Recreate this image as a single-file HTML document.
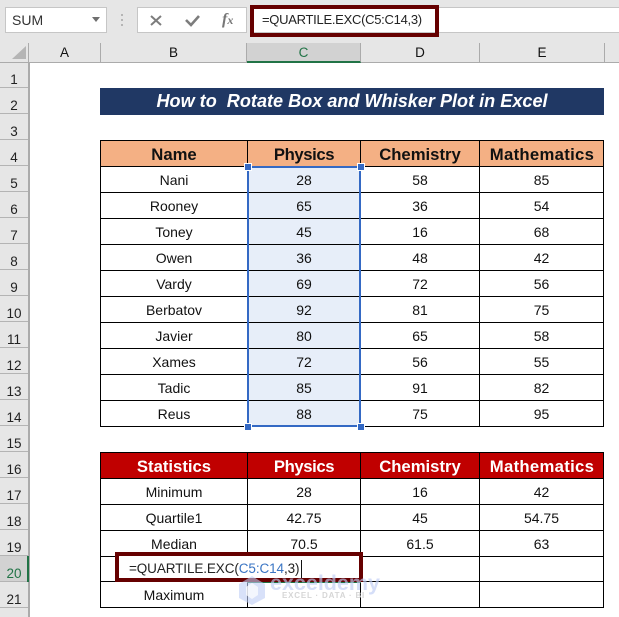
<!DOCTYPE html>
<html><head><meta charset="utf-8"><style>
html,body{margin:0;padding:0;background:#fff}
#p{position:relative;width:619px;height:617px;overflow:hidden;background:#fff;font-family:"Liberation Sans",sans-serif;color:#111}
#p div{position:absolute;box-sizing:border-box}
.ch{top:43px;height:19px;font-size:13.5px;text-align:center;line-height:20px;border-right:1px solid #ababab;color:#111}
.rh{left:0;width:28px;height:26px;font-size:13.5px;text-align:center;line-height:27px;border-bottom:1.5px solid #b4b4b4;color:#222;padding-top:4px}
table{position:absolute;left:100px;border-collapse:collapse;table-layout:fixed;font-size:14px}
td{height:25px;padding:2px 0 0;border:1px solid #000;text-align:center;line-height:23px;box-sizing:border-box;overflow:hidden}
tr.h td{font-size:16.7px;font-weight:bold}
.or td{background:#f4b084;color:#111}
.rd td{background:#c00000;color:#fff}
tr.h td.ph{letter-spacing:-.4px}
tr.h td.m{letter-spacing:.3px;padding-left:1px}
.s td:nth-child(2){background:#e7eef9}
</style></head><body><div id="p">
<div style="left:0;top:0;width:619px;height:62px;background:#e6e6e6"></div>
<div style="left:0;top:62px;width:28px;height:555px;background:#e6e6e6"></div>

<div style="left:5px;top:7px;width:102px;height:26px;background:#fff;border:1px solid #c6c6c6;font-size:14px;line-height:25px;padding-left:6px;color:#333">SUM</div>
<svg style="position:absolute;left:92px;top:17px" width="10" height="6"><path d="M0 0H8L4 5Z" fill="#6f6f6f"/></svg>
<svg style="position:absolute;left:120px;top:13px" width="4" height="14"><rect x="1" y="1" width="2" height="2" fill="#b5b5b5"/><rect x="1" y="6" width="2" height="2" fill="#b5b5b5"/><rect x="1" y="11" width="2" height="2" fill="#b5b5b5"/></svg>
<div style="left:137px;top:7px;width:110px;height:26px;background:#fff;border:1px solid #c6c6c6"></div>
<svg style="position:absolute;left:149px;top:14px" width="14" height="13"><path d="M2 2L12 11M12 2L2 11" stroke="#7d7d7d" stroke-width="2" fill="none"/></svg>
<svg style="position:absolute;left:184px;top:14px" width="17" height="13"><path d="M2 6L7 11L15 2" stroke="#7d7d7d" stroke-width="2.6" fill="none"/></svg>
<div style="left:222px;top:10px;width:16px;height:20px;font:italic bold 16px 'Liberation Serif',serif;color:#777;line-height:20px;white-space:nowrap">f<span style="font-size:12px">x</span></div>
<div style="left:250px;top:7px;width:369px;height:26px;background:#fff;border-top:1px solid #c6c6c6;border-bottom:1px solid #c6c6c6"></div>
<div style="left:262px;top:10px;height:20px;font-size:13px;line-height:20px;color:#222;white-space:nowrap;letter-spacing:-.28px">=QUARTILE.EXC(C5:C14,3)</div>
<div style="left:250px;top:5px;width:189px;height:32px;border:4px solid #660000"></div>

<svg style="position:absolute;left:12px;top:46px" width="15" height="14"><path d="M14 0V13H0Z" fill="#b5b5b5"/></svg>
<div style="left:0;top:62px;width:619px;height:1px;background:#ababab"></div>
<div style="left:28px;top:43px;width:1px;height:20px;background:#ababab"></div>
<div class="ch" style="left:29px;width:72px">A</div>
<div class="ch" style="left:101px;width:146px">B</div>
<div class="ch" style="left:247px;width:114px;background:#d2d2d2;height:20px;color:#217346;border-bottom:2px solid #217346">C</div>
<div class="ch" style="left:361px;width:119px">D</div>
<div class="ch" style="left:480px;width:125px">E</div>
<div style="left:28px;top:62px;width:2px;height:555px;background:#ababab"></div>

<div class="rh" style="top:62px">1</div><div class="rh" style="top:88px">2</div><div class="rh" style="top:114px">3</div><div class="rh" style="top:140px">4</div><div class="rh" style="top:166px">5</div><div class="rh" style="top:192px">6</div><div class="rh" style="top:218px">7</div><div class="rh" style="top:244px">8</div><div class="rh" style="top:270px">9</div><div class="rh" style="top:296px">10</div><div class="rh" style="top:322px">11</div><div class="rh" style="top:348px">12</div><div class="rh" style="top:374px">13</div><div class="rh" style="top:400px">14</div><div class="rh" style="top:426px">15</div><div class="rh" style="top:452px">16</div><div class="rh" style="top:478px">17</div><div class="rh" style="top:504px">18</div><div class="rh" style="top:530px">19</div>
<div class="rh" style="top:556px;background:#d2d2d2;color:#217346">20</div>
<div style="left:27px;top:556px;width:2px;height:26px;background:#217346"></div>
<div class="rh" style="top:582px">21</div>

<div style="left:100px;top:88px;width:504px;height:27px;background:#203864;color:#fff;font-weight:bold;font-style:italic;font-size:18.1px;line-height:27px;text-align:center;white-space:pre">How to  Rotate Box and Whisker Plot in Excel</div>

<table style="top:140px;width:504px"><colgroup><col style="width:147px"><col style="width:113px"><col style="width:119px"><col style="width:124px"></colgroup>
<tr class="h or"><td>Name</td><td class="ph">Physics</td><td>Chemistry</td><td class="m">Mathematics</td></tr>
<tbody class="s">
<tr><td>Nani</td><td>28</td><td>58</td><td>85</td></tr>
<tr><td>Rooney</td><td>65</td><td>36</td><td>54</td></tr>
<tr><td>Toney</td><td>45</td><td>16</td><td>68</td></tr>
<tr><td>Owen</td><td>36</td><td>48</td><td>42</td></tr>
<tr><td>Vardy</td><td>69</td><td>72</td><td>56</td></tr>
<tr><td>Berbatov</td><td>92</td><td>81</td><td>75</td></tr>
<tr><td>Javier</td><td>80</td><td>65</td><td>58</td></tr>
<tr><td>Xames</td><td>72</td><td>56</td><td>55</td></tr>
<tr><td>Tadic</td><td>85</td><td>91</td><td>82</td></tr>
<tr><td>Reus</td><td>88</td><td>75</td><td>95</td></tr>
</tbody></table>

<div style="left:247px;top:166px;width:114px;height:261px;border:2px solid #3469c4"></div>
<div style="left:245px;top:164px;width:6px;height:6px;background:#3469c4;outline:1px solid #fff"></div>
<div style="left:358px;top:164px;width:6px;height:6px;background:#3469c4;outline:1px solid #fff"></div>
<div style="left:245px;top:424px;width:6px;height:6px;background:#3469c4;outline:1px solid #fff"></div>
<div style="left:358px;top:424px;width:6px;height:6px;background:#3469c4;outline:1px solid #fff"></div>

<table style="top:452px;width:504px"><colgroup><col style="width:147px"><col style="width:113px"><col style="width:119px"><col style="width:124px"></colgroup>
<tr class="h rd"><td>Statistics</td><td class="ph">Physics</td><td>Chemistry</td><td class="m">Mathematics</td></tr>
<tr><td>Minimum</td><td>28</td><td>16</td><td>42</td></tr>
<tr><td>Quartile1</td><td>42.75</td><td>45</td><td>54.75</td></tr>
<tr><td>Median</td><td>70.5</td><td>61.5</td><td>63</td></tr>
<tr><td></td><td></td><td></td><td></td></tr>
<tr><td>Maximum</td><td></td><td></td><td></td></tr>
</table>

<div style="left:247px;top:556px;width:114px;height:27px;background:#fff;border:2px solid #217346"></div>
<div style="left:119px;top:556px;width:240px;height:26px;background:#fff"></div>
<div style="left:129px;top:559px;font-size:13.5px;line-height:20px;color:#222;white-space:nowrap;letter-spacing:-.1px">=QUARTILE.EXC(<span style="color:#3a75c4">C5:C14</span>,3)</div>
<div style="left:301px;top:560px;width:1px;height:18px;background:#111"></div>
<div style="left:115px;top:552px;width:248px;height:30px;border:4px solid #660000"></div>
<svg style="position:absolute;left:238px;top:575px" width="28" height="30"><path d="M1 9L14 1L27 9V23L14 30L1 23Z" fill="rgba(190,205,245,.6)"/><path d="M8 12L14 8L20 12V20L14 24L8 20Z" fill="rgba(255,255,255,.7)"/></svg>
<div style="left:270px;top:571px;font-size:21.5px;font-weight:bold;color:rgba(190,205,245,.65);white-space:nowrap;line-height:24px">exceldemy</div>
<div style="left:282px;top:590px;font-size:8px;font-weight:bold;color:#d6d6d6;letter-spacing:.8px;white-space:nowrap;line-height:12px">EXCEL · DATA · BI</div>
</div></body></html>
